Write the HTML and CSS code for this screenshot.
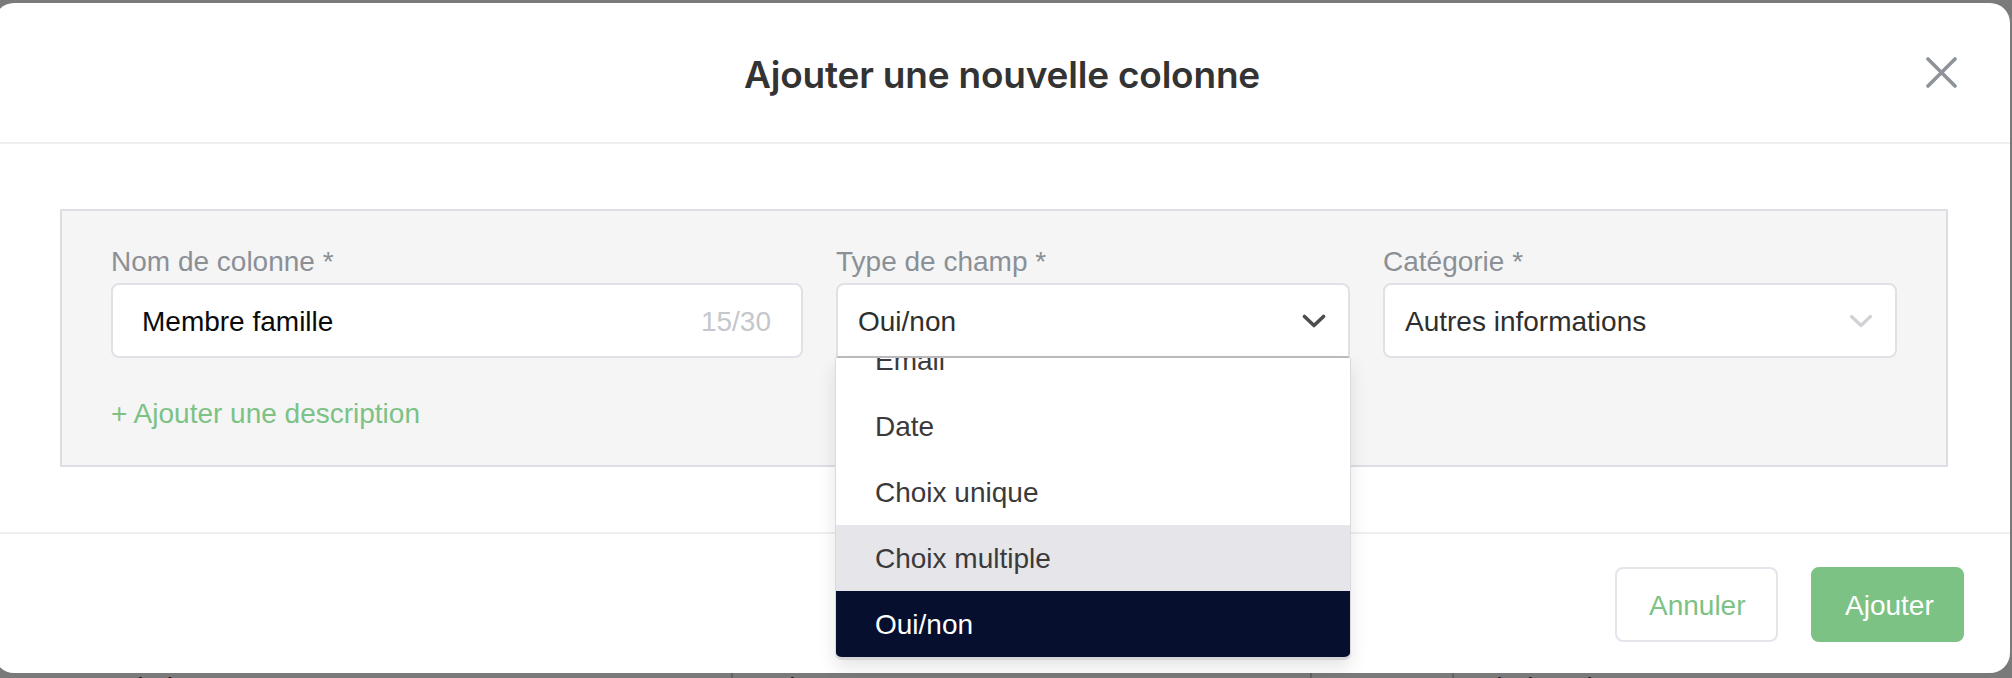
FILE: index.html
```html
<!DOCTYPE html>
<html lang="fr">
<head>
<meta charset="utf-8">
<title>Ajouter une nouvelle colonne</title>
<link rel="stylesheet" href="styles.css">
</head>
<body>
  <div class="page">
    <div class="table-row">
      <div class="cell cell-a">Pass sanitaire</div>
      <div class="cell cell-b">Sabra</div>
      <div class="cell cell-c"></div>
      <div class="cell cell-d">Choix unique</div>
    </div>
  </div>

  <div class="overlay">
    <div class="modal" role="dialog" aria-labelledby="modal-title">
      <header class="modal-header">
        <h1 class="modal-title" id="modal-title">Ajouter une nouvelle colonne</h1>
        <button class="close-btn" aria-label="Fermer">
          <svg width="31" height="31" viewBox="0 0 31 31" fill="none" stroke="#8d9399" stroke-width="3.6" stroke-linecap="round">
            <path d="M2 2 L29 29 M29 2 L2 29"/>
          </svg>
        </button>
      </header>

      <div class="modal-body">
        <div class="panel">
          <div class="fields">
            <div class="field">
              <label class="field-label">Nom de colonne *</label>
              <div class="input">
                <span class="input-value">Membre famille</span>
                <span class="input-count">15/30</span>
              </div>
            </div>

            <div class="field field-open">
              <label class="field-label">Type de champ *</label>
              <div class="select select-open">
                <span class="select-value">Oui/non</span>
                <svg class="chevron" width="24" height="14" viewBox="0 0 24 14" fill="none" stroke="#4d4d4d" stroke-width="3.6" stroke-linecap="round" stroke-linejoin="round">
                  <path d="M2.5 2.5 L12 11.5 L21.5 2.5"/>
                </svg>
              </div>
              <div class="menu">
                <ul class="menu-list">
                  <li class="menu-item">Email</li>
                  <li class="menu-item">Date</li>
                  <li class="menu-item">Choix unique</li>
                  <li class="menu-item is-hover">Choix multiple</li>
                  <li class="menu-item is-selected">Oui/non</li>
                </ul>
              </div>
            </div>

            <div class="field">
              <label class="field-label">Catégorie *</label>
              <div class="select">
                <span class="select-value">Autres informations</span>
                <svg class="chevron" width="24" height="14" viewBox="0 0 24 14" fill="none" stroke="#d0d2d5" stroke-width="3.2" stroke-linecap="round" stroke-linejoin="round">
                  <path d="M2.5 2.5 L12 11.5 L21.5 2.5"/>
                </svg>
              </div>
            </div>
          </div>
          <a class="add-desc" href="#">+ Ajouter une description</a>
        </div>
      </div>

      <footer class="modal-footer">
        <button class="btn btn-secondary">Annuler</button>
        <button class="btn btn-primary">Ajouter</button>
      </footer>
    </div>
  </div>
</body>
</html>
```

FILE: styles.css
```css
* {
  box-sizing: border-box;
}

html, body {
  margin: 0;
  padding: 0;
}

body {
  width: 2012px;
  height: 678px;
  overflow: hidden;
  background: #ffffff;
  font-family: "Liberation Sans", Arial, sans-serif;
  position: relative;
}

/* background application (under the overlay) */
.page {
  padding-top: 668px;
}

.table-row {
  display: flex;
  font-size: 28px;
  line-height: 40px;
  color: #3a3a3a;
}

.cell {
  padding-left: 22px;
  border-right: 2px solid #cfcfcf;
}

.cell-a { width: 733px; }
.cell-b { width: 579px; padding-left: 22px; }
.cell-c { width: 142px; }
.cell-d { flex: 1; border-right: none; }

/* overlay + modal */
.overlay {
  position: absolute;
  inset: 0;
  background: rgba(0, 0, 0, 0.52);
  padding-top: 3px;
}

.modal {
  margin-left: -6px;
  width: 2016px;
  height: 670px;
  background: #ffffff;
  border-radius: 20px;
  display: flex;
  flex-direction: column;
}

.modal-header {
  height: 141px;
  border-bottom: 2px solid #eeeef1;
  display: grid;
  grid-template-columns: 1fr auto 1fr;
  align-items: center;
}

.modal-title {
  grid-column: 2;
  margin: 0;
  font-family: "Inter", "Liberation Sans", sans-serif;
  font-weight: 600;
  font-size: 37px;
  letter-spacing: -0.2px;
  color: #333333;
  padding-top: 4px;
}

.close-btn {
  grid-column: 3;
  justify-self: end;
  margin-right: 53px;
  width: 31px;
  height: 31px;
  padding: 0;
  border: none;
  background: none;
  display: flex;
}

.modal-body {
  padding: 65px 62px 65px 66px;
  position: relative;
  z-index: 2;
}

.panel {
  background: #f5f5f5;
  border: 2px solid #dcdee3;
  padding: 33px 49px 33px 49px;
}

.fields {
  display: grid;
  grid-template-columns: 692px 1fr 1fr;
  column-gap: 33px;
}

.field {
  display: flex;
  flex-direction: column;
  position: relative;
}

.field-label {
  font-size: 28px;
  line-height: 36px;
  color: #8b9096;
  margin-bottom: 3px;
}

.input,
.select {
  height: 75px;
  background: #ffffff;
  border: 2px solid #dfe1e6;
  border-radius: 8px;
  display: flex;
  align-items: center;
  font-size: 28px;
  padding-top: 3px;
}

.input {
  padding-left: 29px;
  padding-right: 30px;
  justify-content: space-between;
}

.input-value {
  color: #0a0a0a;
}

.input-count {
  color: #c4c7cb;
}

.select {
  padding-left: 20px;
  padding-right: 22px;
  justify-content: space-between;
}

.select-value {
  color: #2e2e2e;
}

.select-open {
  border-bottom-color: #bdbdc0;
  border-radius: 8px 8px 0 0;
}

.chevron {
  margin-top: -3px;
}

.menu {
  position: absolute;
  top: 100%;
  left: -1px;
  right: -1px;
  background: #ffffff;
  border: 1px solid #d9dadd;
  border-top: none;
  border-bottom: 3px solid #d6d6d9;
  border-radius: 0 0 7px 7px;
  box-shadow: 0 8px 18px rgba(0, 0, 0, 0.10);
  overflow: hidden;
  z-index: 5;
}

.menu-list {
  list-style: none;
  margin: -31px 0 0 0;
  padding: 0;
}

.menu-item {
  height: 66px;
  padding-top: 2px;
  padding-left: 39px;
  line-height: 64px;
  font-size: 28px;
  color: #3a3a3a;
}

.menu-item.is-hover {
  background: #e5e5ea;
}

.menu-item.is-selected {
  background: #060f2e;
  color: #ffffff;
}

.add-desc {
  display: block;
  margin-top: 38px;
  font-size: 28px;
  line-height: 36px;
  color: #7cc285;
  text-decoration: none;
}

.modal-footer {
  flex: 1;
  border-top: 2px solid #eeeef1;
  display: flex;
  justify-content: flex-end;
  align-items: flex-start;
  gap: 33px;
  padding: 33px 46px 0 0;
}

.btn {
  height: 75px;
  padding: 2px 32px 0;
  border-radius: 8px;
  border: 2px solid #e3e5ea;
  font-family: "Liberation Sans", Arial, sans-serif;
  font-size: 28px;
  background: #ffffff;
  color: #7cc285;
}

.btn-secondary {
  width: 163px;
}

.btn-primary {
  width: 153px;
  background: #7cc285;
  border-color: #7cc285;
  color: #ffffff;
}
```
